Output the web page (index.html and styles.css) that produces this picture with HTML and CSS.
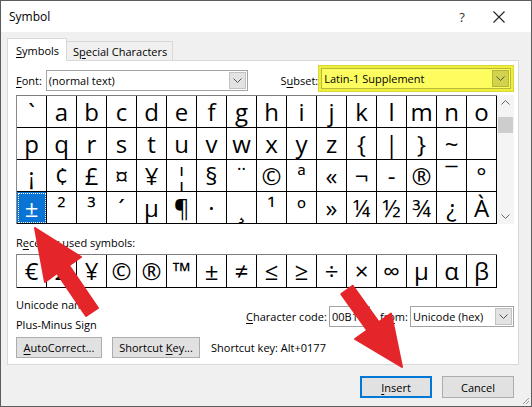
FILE: index.html
```html
<!DOCTYPE html>
<html>
<head>
<meta charset="utf-8">
<link rel="stylesheet" href="styles.css">
</head>
<body>
<div class="win">
  <div class="titlebar">
    <span class="title">Symbol</span>
    <span class="help">?</span>
    <span class="close"><svg width="12" height="12" viewBox="0 0 12 12"><path d="M0.5 0.5L11.5 11.5M11.5 0.5L0.5 11.5" stroke="#222" stroke-width="1.1" fill="none"/></svg></span>
  </div>
  <div class="body">
    <div class="tabs">
      <div class="tab active"><span><u>S</u>ymbols</span></div>
      <div class="tab"><span>S<u>p</u>ecial Characters</span></div>
    </div>
    <div class="panel">
      <div class="row-font">
        <span class="lbl lbl-font"><span><u>F</u>ont:</span></span>
        <div class="combo combo-font"><span class="combo-text">(normal text)</span><span class="dd"><svg width="9" height="5" viewBox="0 0 9 5"><path d="M0.5 0.5L4.5 4.5L8.5 0.5" stroke="#555" fill="none"/></svg></span></div>
        <span class="lbl lbl-subset"><span>S<u>u</u>bset:</span></span>
        <div class="hl">
          <div class="combo combo-subset"><span class="combo-text">Latin-1 Supplement</span><span class="dd dd-hl"><svg width="9" height="5" viewBox="0 0 9 5"><path d="M0.5 0.5L4.5 4.5L8.5 0.5" stroke="#555" fill="none"/></svg></span></div>
        </div>
      </div>
      <div class="grid-wrap">
        <div class="grid">
          <span>`</span><span>a</span><span>b</span><span>c</span><span>d</span><span>e</span><span>f</span><span>g</span><span>h</span><span>i</span><span>j</span><span>k</span><span>l</span><span>m</span><span>n</span><span>o</span>
          <span>p</span><span>q</span><span>r</span><span>s</span><span>t</span><span>u</span><span>v</span><span>w</span><span>x</span><span>y</span><span>z</span><span>{</span><span>|</span><span>}</span><span>~</span><span></span>
          <span>&iexcl;</span><span>&cent;</span><span>&pound;</span><span>&curren;</span><span>&yen;</span><span>&brvbar;</span><span>&sect;</span><span>&uml;</span><span>&copy;</span><span>&ordf;</span><span>&laquo;</span><span>&not;</span><span>-</span><span>&reg;</span><span>&macr;</span><span>&deg;</span>
          <span class="sel">&plusmn;</span><span>&sup2;</span><span>&sup3;</span><span>&acute;</span><span>&micro;</span><span>&para;</span><span>&middot;</span><span>&cedil;</span><span>&sup1;</span><span>&ordm;</span><span>&raquo;</span><span>&frac14;</span><span>&frac12;</span><span>&frac34;</span><span>&iquest;</span><span>&Agrave;</span>
        </div>
        <div class="scroll">
          <svg class="sc-up" width="9" height="5" viewBox="0 0 9 5"><path d="M0.5 4.5L4.5 0.5L8.5 4.5" stroke="#666" fill="none"/></svg>
          <div class="thumb"></div>
          <svg class="sc-down" width="9" height="5" viewBox="0 0 9 5"><path d="M0.5 0.5L4.5 4.5L8.5 0.5" stroke="#666" fill="none"/></svg>
        </div>
      </div>
      <div class="recent-label">R<u>e</u>cently used symbols:</div>
      <div class="recent">
        <span>&euro;</span><span>&pound;</span><span>&yen;</span><span>&copy;</span><span>&reg;</span><span>&trade;</span><span>&plusmn;</span><span>&ne;</span><span>&le;</span><span>&ge;</span><span>&divide;</span><span>&times;</span><span>&infin;</span><span>&micro;</span><span>&alpha;</span><span>&beta;</span>
      </div>
      <div class="info">
        <div class="names">
          <div>Unicode name:</div>
          <div>Plus-Minus Sign</div>
        </div>
        <div class="code">
          <span class="lbl lbl-code"><span><u>C</u>haracter code:</span></span>
          <div class="input">00B1</div>
          <span class="lbl lbl-from"><span>fr<u>o</u>m:</span></span>
          <div class="combo combo-from"><span class="combo-text">Unicode (hex)</span><span class="dd"><svg width="9" height="5" viewBox="0 0 9 5"><path d="M0.5 0.5L4.5 4.5L8.5 0.5" stroke="#555" fill="none"/></svg></span></div>
        </div>
      </div>
      <div class="btnrow">
        <div class="btn btn-auto"><span><u>A</u>utoCorrect...</span></div>
        <div class="btn btn-short"><span>Shortcut <u>K</u>ey...</span></div>
        <span class="shortcut">Shortcut key: Alt+0177</span>
      </div>
    </div>
    <div class="footer">
      <div class="btn btn-foot default"><span><u>I</u>nsert</span></div>
      <div class="btn btn-foot"><span>Cancel</span></div>
    </div>
  </div>
  <svg class="grip" width="10" height="10" viewBox="0 0 10 10"><path d="M9 3L3 9M9 6L6 9" stroke="#999" fill="none"/></svg>
  <svg class="arrows" width="532" height="407" viewBox="0 0 532 407">
    <polygon points="35,228 81,257 69,265.5 98,308 86,316 57,273 45,282" fill="#e4262b" stroke="#e4262b" stroke-width="2" stroke-linejoin="round"/>
    <polygon points="402,367 355,339 367.3,330.4 341.3,294.1 352.7,285.9 378.7,322.2 391,313.5" fill="#e4262b" stroke="#e4262b" stroke-width="2" stroke-linejoin="round"/>
  </svg>
</div>
</body>
</html>
```

FILE: styles.css
```css
* { box-sizing: border-box; margin: 0; padding: 0; }
html, body { width: 532px; height: 407px; overflow: hidden; background: #fff; }
body { font-family: "Open Sans", "Noto Sans", sans-serif; font-size: 11px; color: #000; }
u { text-decoration: underline; text-underline-offset: 2px; text-decoration-thickness: 1px; }

.win { position: relative; width: 532px; height: 407px; border: 1px solid #5c5c5c; background: #f0f0f0; display: flex; flex-direction: column; }

.titlebar { flex: none; height: 31px; background: #fff; display: flex; align-items: center; padding-left: 8px; padding-right: 10px; }
.title { flex: 1; font-size: 12px; color: #000; }
.help { width: 30px; text-align: center; font-size: 13px; color: #333; }
.close { width: 44px; display: flex; justify-content: center; align-items: center; }

.body { flex: 1; display: flex; flex-direction: column; padding: 6px 12px 0 6px; }

.tabs { flex: none; height: 22px; display: flex; align-items: flex-start; }
.tab { display: flex; align-items: center; white-space: nowrap; }
.tab.active { position: relative; z-index: 1; width: 60px; height: 23px; background: #fff; border: 1px solid #d9d9d9; border-bottom: none; padding-left: 8px; padding-top: 1px; }
.tab:not(.active) { margin-top: 3px; width: 106px; height: 19px; border: 1px solid #d9d9d9; border-left: none; border-bottom: none; padding-left: 6px; }

.panel { flex: none; height: 305px; background: #fff; border: 1px solid #d9d9d9; padding: 9px 4px 0 8px; display: flex; flex-direction: column; }

.row-font { flex: none; height: 21px; display: flex; align-items: flex-start; }
.lbl { display: flex; align-items: center; height: 21px; white-space: nowrap; }
.lbl-font { width: 30px; }
.lbl-subset { width: 38px; margin-left: 32px; }

.combo { display: flex; height: 21px; border: 1px solid #a3a3a3; background: #fff; }
.combo-text { flex: 1; display: flex; align-items: center; padding-left: 2px; white-space: nowrap; }
.dd { flex: none; width: 17px; margin: 1px; background: #e3e3e3; border: 1px solid #c2c2c2; display: flex; align-items: center; justify-content: center; }
.combo-font { width: 204px; }

.hl { margin-top: -5px; width: 197px; height: 27px; padding: 2px; background: #efef3a; border: 1px solid #d8d83a; }
.combo-subset { height: 21px; background: #fdfd60; border-color: #b8b83a; }
.dd-hl { background: #d2d24c; border-color: #b5b53a; }

.grid-wrap { flex: none; margin-top: 4px; height: 129px; display: flex; }
.grid { display: grid; grid-template-columns: repeat(16, 30px); grid-template-rows: repeat(4, 32px); border-top: 1px solid #7d7d7d; border-left: 1px solid #8a8a8a; }
.grid span, .recent span { border-right: 1px solid #000; border-bottom: 1px solid #000; text-align: center; font-size: 24px; font-family: "Open Sans", "Noto Sans", sans-serif; white-space: nowrap; }
.grid span { line-height: 31px; }
.grid span.sel { background: #0a74d4; color: #fff; outline: 1px dotted #fff; outline-offset: -2px; }
.scroll { width: 17px; height: 129px; background: #f4f4f4; display: flex; flex-direction: column; align-items: center; }
.sc-up { margin-top: 5px; }
.thumb { margin-top: 12px; width: 15px; height: 16px; background: #cdcdcd; }
.sc-down { margin-top: auto; margin-bottom: 5px; }

.recent-label { flex: none; margin-top: 11px; height: 16px; line-height: 16px; }
.recent { flex: none; margin-top: 3px; height: 34px; display: grid; grid-template-columns: repeat(16, 30px); grid-template-rows: 33px; border-top: 1px solid #7d7d7d; border-left: 1px solid #8a8a8a; width: 481px; }
.recent span { line-height: 32px; }

.info { flex: none; margin-top: 9px; height: 36px; display: flex; }
.names { display: flex; flex-direction: column; gap: 4px; }
.names div { height: 16px; line-height: 16px; }
.code { margin-left: auto; margin-top: 9px; height: 21px; display: flex; }
.lbl-code { width: 83px; }
.input { width: 41px; height: 21px; border: 1px solid #a3a3a3; display: flex; align-items: center; padding-left: 2px; }
.lbl-from { width: 30px; margin-left: 10px; }
.combo-from { width: 104px; }

.btnrow { flex: none; margin-top: 4px; height: 21px; display: flex; align-items: center; }
.btn { height: 21px; display: flex; align-items: center; justify-content: center; background: #e1e1e1; border: 1px solid #adadad; white-space: nowrap; }
.btn-auto { width: 86px; }
.btn-short { width: 88px; margin-left: 10px; }
.shortcut { margin-left: 11px; }

.footer { flex: none; margin-top: 11px; display: flex; justify-content: flex-end; gap: 10px; padding-right: 5px; }
.btn-foot { width: 72px; height: 22px; }
.btn-foot.default { border: 1px solid #0078d7; box-shadow: inset 0 0 0 1px #0078d7; }

.grip { position: absolute; right: 1px; bottom: 1px; }
.arrows { position: absolute; left: -1px; top: -1px; pointer-events: none; }
```
